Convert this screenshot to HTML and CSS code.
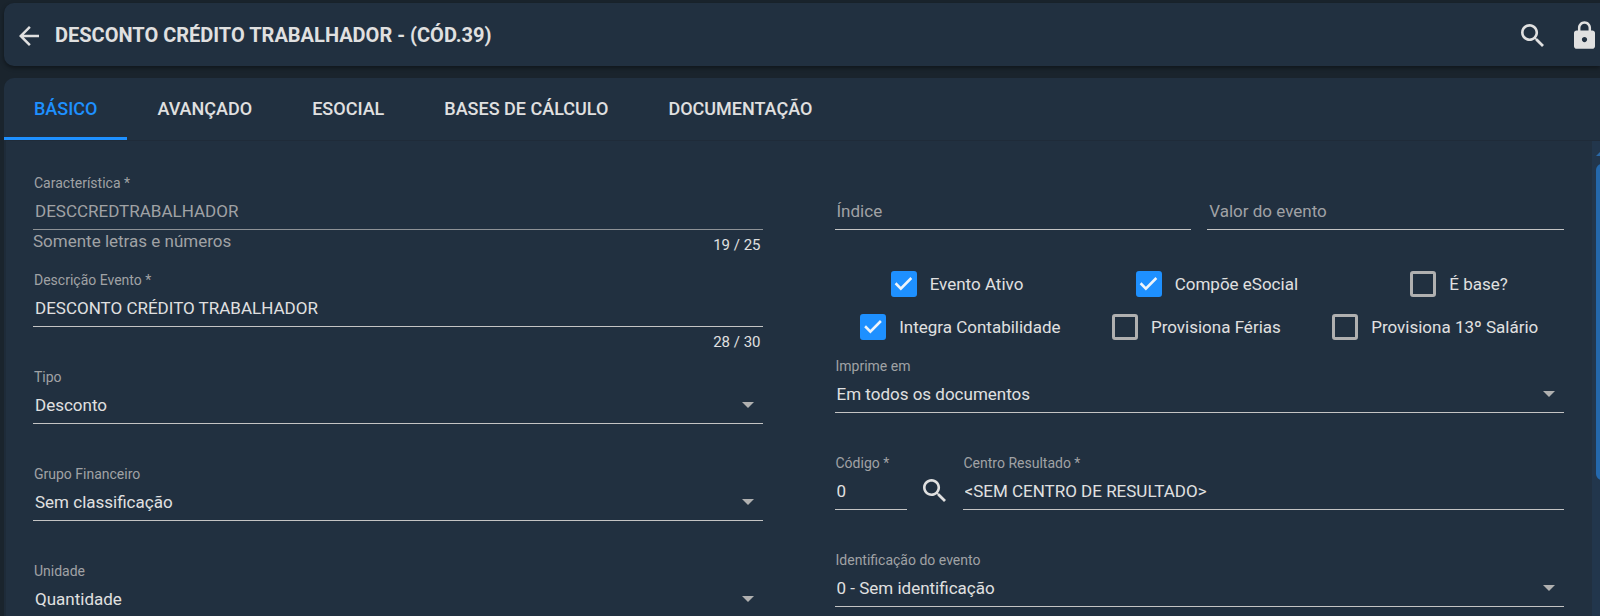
FILE: index.html
```html
<!DOCTYPE html>
<html lang="pt-BR">
<head>
<meta charset="utf-8">
<title>Desconto Crédito Trabalhador</title>
<link rel="stylesheet" href="styles.css">
</head>
<body>
<header class="topbar">
  <button class="icon-btn" type="button" aria-label="Voltar">
    <svg class="icon-back" viewBox="4 4 16 16"><path d="M20 11H7.83l5.59-5.59L12 4l-8 8 8 8 1.41-1.41L7.83 13H20v-2z"/></svg>
  </button>
  <h1 class="title">DESCONTO CRÉDITO TRABALHADOR - (CÓD.39)</h1>
  <button class="icon-btn" type="button" aria-label="Pesquisar">
    <svg class="icon-search" viewBox="3 3 17.5 17.5"><path d="M15.5 14h-.79l-.28-.27C15.41 12.59 16 11.11 16 9.5 16 5.91 13.09 3 9.5 3S3 5.91 3 9.5 5.91 16 9.5 16c1.61 0 3.09-.59 4.23-1.57l.27.28v.79l5 4.99L20.49 19l-4.99-5zm-6 0C7.01 14 5 11.99 5 9.5S7.01 5 9.5 5 14 7.01 14 9.5 11.99 14 9.5 14z"/></svg>
  </button>
  <button class="icon-btn icon-btn-lock" type="button" aria-label="Bloquear">
    <svg class="icon-lock" viewBox="4 1 16 21"><path d="M18 8h-1V6c0-2.76-2.24-5-5-5S7 3.240 7 6v2H6c-1.1 0-2 .9-2 2v10c0 1.100.9 2 2 2h12c1.100 0 2-.9 2-2V10c0-1.100-.9-2-2-2zm-6 9c-1.100 0-2-.9-2-2s.9-2 2-2 2 .9 2 2-.9 2-2 2zM15.100 8H8.900V6c0-1.710 1.390-3.100 3.100-3.100s3.100 1.390 3.100 3.100v2z"/></svg>
  </button>
</header>

<main class="card">
  <nav class="tabs" role="tablist">
    <button class="tab tab-active" type="button" role="tab" aria-selected="true">BÁSICO</button>
    <button class="tab" type="button" role="tab">AVANÇADO</button>
    <button class="tab" type="button" role="tab">ESOCIAL</button>
    <button class="tab" type="button" role="tab">BASES DE CÁLCULO</button>
    <button class="tab" type="button" role="tab">DOCUMENTAÇÃO</button>
  </nav>

  <div class="panel">
    <form class="form">
      <div class="column">
        <div class="field">
          <label class="label" for="caracteristica">Característica *</label>
          <input class="control control-disabled" id="caracteristica" type="text" value="DESCCREDTRABALHADOR" disabled>
          <div class="footer"><span class="hint">Somente letras e números</span><span class="counter">19 / 25</span></div>
        </div>
        <div class="field">
          <label class="label" for="descricao">Descrição Evento *</label>
          <input class="control" id="descricao" type="text" value="DESCONTO CRÉDITO TRABALHADOR">
          <div class="footer"><span class="counter">28 / 30</span></div>
        </div>
        <div class="field">
          <label class="label" for="tipo">Tipo</label>
          <div class="select-wrap"><select class="control" id="tipo"><option>Desconto</option></select></div>
        </div>
        <div class="field">
          <label class="label" for="grupo">Grupo Financeiro</label>
          <div class="select-wrap"><select class="control" id="grupo"><option>Sem classificação</option></select></div>
        </div>
        <div class="field">
          <label class="label" for="unidade">Unidade</label>
          <div class="select-wrap"><select class="control" id="unidade"><option>Quantidade</option></select></div>
        </div>
      </div>

      <div class="column">
        <div class="pair">
          <input class="control" type="text" placeholder="Índice" aria-label="Índice">
          <input class="control" type="text" placeholder="Valor do evento" aria-label="Valor do evento">
        </div>
        <div class="checks">
          <div class="check-row">
            <label class="check"><input class="box" type="checkbox" checked>Evento Ativo</label>
            <label class="check"><input class="box" type="checkbox" checked>Compõe eSocial</label>
            <label class="check"><input class="box" type="checkbox">É base?</label>
          </div>
          <div class="check-row">
            <label class="check"><input class="box" type="checkbox" checked>Integra Contabilidade</label>
            <label class="check"><input class="box" type="checkbox">Provisiona Férias</label>
            <label class="check"><input class="box" type="checkbox">Provisiona 13º Salário</label>
          </div>
        </div>
        <div class="field">
          <label class="label" for="imprime">Imprime em</label>
          <div class="select-wrap"><select class="control" id="imprime"><option>Em todos os documentos</option></select></div>
        </div>
        <div class="lookup">
          <div class="field field-code">
            <label class="label" for="codigo">Código *</label>
            <input class="control" id="codigo" type="text" value="0">
          </div>
          <button class="icon-btn lookup-btn" type="button" aria-label="Buscar centro de resultado">
            <svg class="icon-search" viewBox="3 3 17.5 17.5"><path d="M15.5 14h-.79l-.28-.27C15.41 12.59 16 11.11 16 9.5 16 5.91 13.09 3 9.5 3S3 5.91 3 9.5 5.91 16 9.5 16c1.61 0 3.09-.59 4.23-1.57l.27.28v.79l5 4.99L20.49 19l-4.99-5zm-6 0C7.01 14 5 11.99 5 9.5S7.01 5 9.5 5 14 7.01 14 9.5 11.99 14 9.5 14z"/></svg>
          </button>
          <div class="field field-grow">
            <label class="label" for="centro">Centro Resultado *</label>
            <input class="control" id="centro" type="text" value="&lt;SEM CENTRO DE RESULTADO&gt;">
          </div>
        </div>
        <div class="field">
          <label class="label" for="identificacao">Identificação do evento</label>
          <div class="select-wrap"><select class="control" id="identificacao"><option>0 - Sem identificação</option></select></div>
        </div>
      </div>
    </form>
    <div class="scrollbar"><div class="scroll-arrow"></div><div class="scroll-thumb"></div></div>
  </div>
</main>
</body>
</html>
```
FILE: styles.css
```css
* { box-sizing: border-box; }

body {
  margin: 0;
  height: 100vh;
  padding: 3px 0 0 4px;
  display: flex;
  flex-direction: column;
  gap: 12px;
  overflow: hidden;
  background: #1a242d;
  color: #e0e0e0;
  font-family: Roboto, "Liberation Sans", sans-serif;
  font-size: 17px;
}

button, input, select { font: inherit; color: inherit; }
button { background: none; border: 0; padding: 0; cursor: pointer; }
svg { display: block; fill: #e0e0e0; }

.topbar {
  flex: none;
  display: flex;
  align-items: center;
  padding: 20px 5px 18px 15px;
  background: #213040;
  border-radius: 10px 0 0 10px;
  box-shadow: 0 2px 4px rgba(0, 0, 0, 0.4);
}
.title {
  flex: 1;
  margin: 0 0 0 16px;
  font-size: 20px;
  line-height: 25px;
  font-weight: 700;
}
.icon-back { width: 20px; height: 20px; }
.icon-search { width: 23px; height: 23px; }
.icon-lock { width: 21px; height: 28px; }
.icon-btn-lock { margin: -4px 0 -2px 30px; }

.card {
  flex: 1;
  min-height: 0;
  display: flex;
  flex-direction: column;
  background: #213040;
  border-radius: 10px 0 0 0;
}
.tabs { flex: none; display: flex; border-bottom: 1px solid #1f2b39; }
.tab {
  padding: 19px 30px 17px;
  line-height: 23px;
  font-size: 18px;
  font-weight: 500;
  border-bottom: 3px solid transparent;
}
.tab-active { color: #1e90ff; border-bottom-color: #1e90ff; }

.panel { flex: 1; min-height: 0; display: flex; overflow: hidden; border-left: 2px solid #1e2b39; }
.form {
  flex: 1;
  display: grid;
  grid-template-columns: 1fr 1fr;
  gap: 72px;
  align-items: start;
  padding: 32px 28px 0 27px;
}
.field { height: 97px; }
.label {
  display: block;
  padding-left: 1px;
  font-size: 14px;
  line-height: 20px;
  color: #a0a2a5;
}
.control {
  display: block;
  width: 100%;
  height: 37px;
  padding: 0 2px;
  background: none;
  border: 0;
  border-bottom: 1px solid #c4c4c4;
  border-radius: 0;
  outline: 0;
  appearance: none;
}
.control::placeholder { color: #a0a2a5; opacity: 1; }
.control-disabled { color: #a0a2a5; border-bottom-color: #8e9296; }
.select-wrap { position: relative; }
.select-wrap::after {
  content: "";
  position: absolute;
  right: 9px;
  top: 15px;
  border: 6px solid transparent;
  border-top-color: #b0b0b0;
  border-bottom: 0;
  pointer-events: none;
}
.footer { display: flex; }
.hint { line-height: 22px; color: #a0a2a5; }
.counter { margin-left: auto; padding-right: 2px; font-size: 15px; line-height: 30px; }

.pair { display: grid; grid-template-columns: 1fr 1fr; gap: 16px; padding-top: 20px; }
.checks { padding: 32px 0 8px; }
.check-row { display: flex; justify-content: space-around; }
.check { display: flex; align-items: center; gap: 13px; height: 43px; }
.box {
  width: 26px;
  height: 26px;
  margin: 0;
  appearance: none;
  border: 3px solid #b0b0b0;
  border-radius: 3px;
}
.box:checked { background: #1e90ff; border-color: #1e90ff; }
.box:checked::before {
  content: "";
  display: block;
  height: 20px;
  background: #eef4fa;
  clip-path: polygon(5% 54%, 14% 44%, 36% 66%, 84% 18%, 93% 28%, 36% 85%);
}

.lookup { display: flex; }
.field-code { width: 72px; }
.field-grow { flex: 1; }
.lookup-btn { align-self: flex-start; padding: 26px 17px 0 16px; }

.scrollbar { width: 8px; flex: none; padding: 8px 0 0 4px; background: #22364c; overflow: hidden; }
.scroll-arrow {
  width: 14px;
  height: 7px;
  background: #2a68a6;
  clip-path: polygon(50% 0, 100% 100%, 0 100%);
}
.scroll-thumb { width: 12px; height: 316px; margin-top: 8px; background: #2468ac; border-radius: 6px; }
```
